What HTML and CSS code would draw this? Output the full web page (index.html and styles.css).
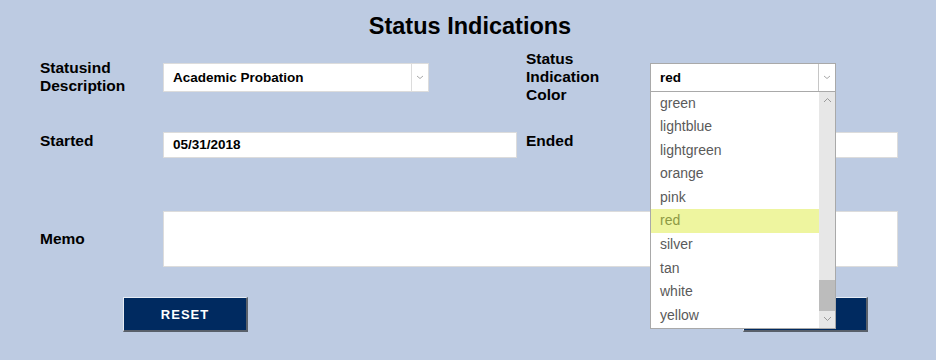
FILE: index.html
```html
<!DOCTYPE html>
<html lang="en">
<head>
<meta charset="utf-8">
<title>Status Indications</title>
<link rel="stylesheet" href="styles.css">
</head>
<body>
<div class="page">
  <h1 class="title">Status Indications</h1>

  <div class="row row-first">
    <div class="label">Statusind<br>Description</div>
    <div class="field">
      <div class="select select-desc">
        <span class="select-text">Academic Probation</span>
        <span class="select-btn"><svg width="8" height="5" viewBox="0 0 8 5"><path d="M1 1 L4 3.5 L7 1" fill="none" stroke="#a9a9a9" stroke-width="1"/></svg></span>
      </div>
    </div>
    <div class="label">Status<br>Indication<br>Color</div>
    <div class="field">
      <div class="select select-color">
        <span class="select-text">red</span>
        <span class="select-btn"><svg width="8" height="5" viewBox="0 0 8 5"><path d="M1 1 L4 3.5 L7 1" fill="none" stroke="#a9a9a9" stroke-width="1"/></svg></span>
        <div class="dropdown">
          <ul class="options">
            <li>green</li>
            <li>lightblue</li>
            <li>lightgreen</li>
            <li>orange</li>
            <li>pink</li>
            <li class="active">red</li>
            <li>silver</li>
            <li>tan</li>
            <li>white</li>
            <li>yellow</li>
          </ul>
          <div class="scrollbar">
            <span class="sb-arrow"><svg width="9" height="6" viewBox="0 0 9 6"><path d="M1 5 L4.5 1.5 L8 5" fill="none" stroke="#9a9a9a" stroke-width="1"/></svg></span>
            <span class="sb-track"><span class="sb-thumb"></span></span>
            <span class="sb-arrow"><svg width="9" height="6" viewBox="0 0 9 6"><path d="M1 1 L4.5 4.5 L8 1" fill="none" stroke="#9a9a9a" stroke-width="1"/></svg></span>
          </div>
        </div>
      </div>
    </div>
  </div>

  <div class="row row-second">
    <div class="label">Started</div>
    <div class="field"><div class="input input-started">05/31/2018</div></div>
    <div class="label">Ended</div>
    <div class="field"><div class="input input-ended"></div></div>
  </div>

  <div class="row row-memo">
    <div class="label">Memo</div>
    <div class="memo"></div>
  </div>

  <div class="buttons">
    <button class="btn">RESET</button>
    <button class="btn">SAVE</button>
  </div>
</div>
</body>
</html>
```

FILE: styles.css
```css
html, body {
  margin: 0;
  padding: 0;
  background: #bdcbe2;
}
body {
  font-family: "Liberation Sans", Arial, sans-serif;
  color: #000;
  width: 936px;
  height: 360px;
  overflow: hidden;
}
.page {
  padding-top: 12px;
}
.title {
  margin: 0;
  text-align: center;
  font-size: 23.5px;
  line-height: 28px;
  font-weight: bold;
  padding-left: 4px;
}
.row {
  display: grid;
  grid-template-columns: 123px 363px 124px 248px;
  padding-left: 40px;
}
.row-first {
  margin-top: 10px;
  align-items: center;
}
.row-second {
  margin-top: 28px;
  align-items: start;
}
.row-memo {
  margin-top: 53px;
  grid-template-columns: 123px 735px;
  align-items: center;
}
.label {
  font-size: 15.5px;
  line-height: 18px;
  font-weight: bold;
}
.field {
  position: relative;
}
.select {
  position: relative;
  display: flex;
  align-items: center;
  height: 29px;
  box-sizing: border-box;
  background: #fff;
  border: 1px solid #dcdcdc;
}
.select-desc { width: 266px; }
.select-color {
  width: 186px;
  border-color: #a9a9a9;
}
.select-text {
  flex: 1;
  padding-left: 9px;
  font-size: 13.5px;
  font-weight: bold;
  padding-top: 1px;
}
.select-btn {
  width: 16px;
  height: 100%;
  border-left: 1px solid #dcdcdc;
  display: flex;
  align-items: center;
  justify-content: center;
}
.select-color .select-btn { border-left-color: #c6c6c6; }
.dropdown {
  position: absolute;
  left: -1px;
  top: 28px;
  width: 186px;
  height: 237px;
  box-sizing: border-box;
  background: #fff;
  border: 1px solid #a9a9a9;
  border-top: none;
  display: flex;
  z-index: 5;
}
.options {
  list-style: none;
  margin: 0;
  padding: 0;
  flex: 1;
}
.options li {
  height: 23.6px;
  line-height: 23.6px;
  padding-left: 9px;
  font-size: 14px;
  color: #5a5a5a;
}
.options li.active {
  background: #eef59f;
  color: #8d9a45;
}
.scrollbar {
  width: 16px;
  background: #e7e7e7;
  display: flex;
  flex-direction: column;
}
.sb-arrow {
  height: 17px;
  display: flex;
  align-items: center;
  justify-content: center;
}
.sb-track {
  flex: 1;
  display: flex;
  flex-direction: column;
  justify-content: flex-end;
}
.sb-thumb {
  display: block;
  height: 31px;
  background: #bcbcbc;
}
.input {
  height: 26px;
  box-sizing: border-box;
  background: #fff;
  border: 1px solid #dcdcdc;
  padding-left: 9px;
  font-size: 13.5px;
  font-weight: bold;
  line-height: 24px;
}
.input-started { width: 354px; }
.input-ended { width: 248px; }
.memo {
  height: 56px;
  box-sizing: border-box;
  background: #fff;
  border: 1px solid #dcdcdc;
}
.buttons {
  display: flex;
  justify-content: space-between;
  padding: 0 68px 0 123px;
  margin-top: 30px;
}
.btn {
  width: 125px;
  height: 35px;
  box-sizing: border-box;
  background: #002a60;
  color: #fff;
  font-family: "Liberation Sans", Arial, sans-serif;
  font-size: 13px;
  font-weight: bold;
  letter-spacing: 1px;
  border-style: solid;
  border-width: 1px 2px 2px 1px;
  border-color: #e6ecf4 #59606a #59606a #e6ecf4;
  padding: 0;
}
```
